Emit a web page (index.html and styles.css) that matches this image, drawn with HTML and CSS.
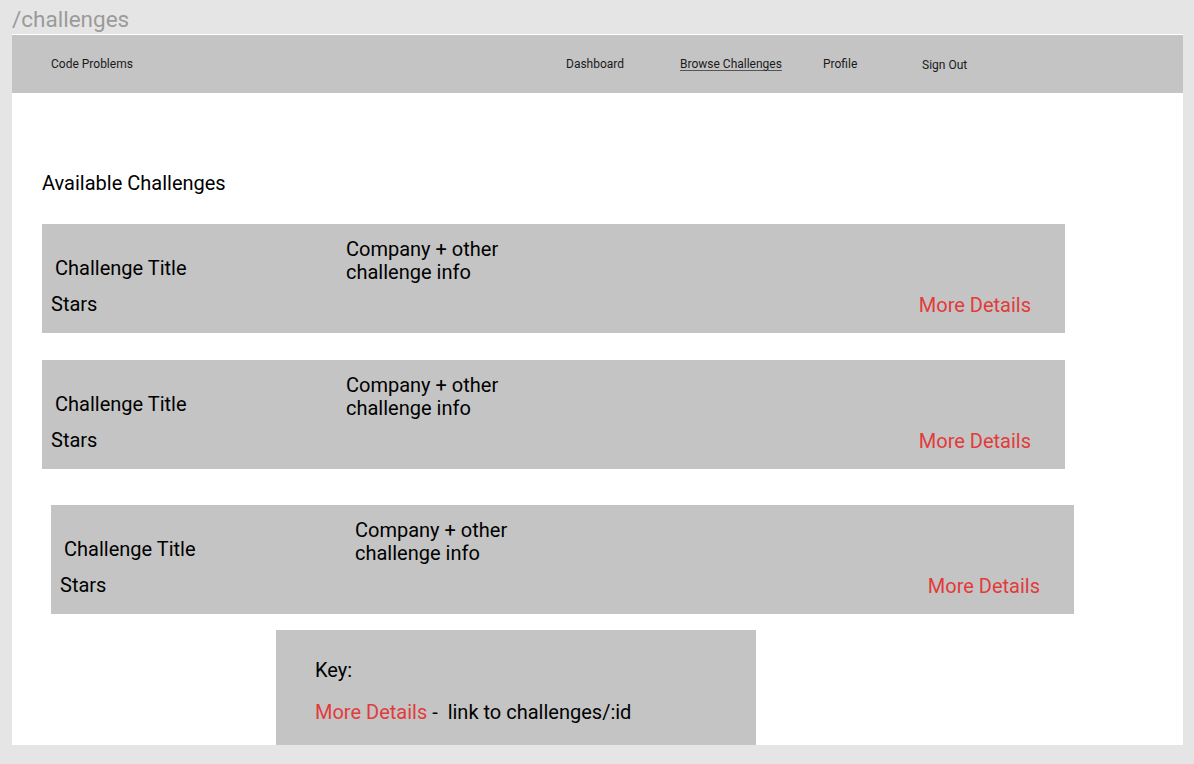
FILE: index.html
```html
<!DOCTYPE html>
<html lang="en">
<head>
<meta charset="utf-8">
<title>/challenges</title>
<link rel="stylesheet" href="styles.css">
</head>
<body>
<div class="route">/challenges</div>
<div class="frame">
  <nav class="nav">
    <span class="brand">Code Problems</span>
    <span class="nav-link">Dashboard</span>
    <span class="nav-link active">Browse Challenges</span>
    <span class="nav-link">Profile</span>
    <span class="nav-link signout">Sign Out</span>
  </nav>
  <main class="content">
    <h1 class="heading">Available Challenges</h1>
    <div class="card">
      <div class="card-left">
        <div class="card-title">Challenge Title</div>
        <div class="card-stars">Stars</div>
      </div>
      <div class="card-info">Company + other<br>challenge info</div>
      <div class="card-link">More Details</div>
    </div>
    <div class="card card-second">
      <div class="card-left">
        <div class="card-title">Challenge Title</div>
        <div class="card-stars">Stars</div>
      </div>
      <div class="card-info">Company + other<br>challenge info</div>
      <div class="card-link">More Details</div>
    </div>
    <div class="card card-third">
      <div class="card-left">
        <div class="card-title">Challenge Title</div>
        <div class="card-stars">Stars</div>
      </div>
      <div class="card-info">Company + other<br>challenge info</div>
      <div class="card-link">More Details</div>
    </div>
    <div class="key">
      <div class="key-title">Key:</div>
      <div class="key-row"><span class="red">More Details</span> -&nbsp; link to challenges/:id</div>
    </div>
  </main>
</div>
</body>
</html>
```

FILE: styles.css
```css
* { box-sizing: border-box; }

html, body {
  margin: 0;
  padding: 0;
}

body {
  background: #e5e5e5;
  font-family: Roboto, "Liberation Sans", Arial, sans-serif;
  color: #000;
  width: 1194px;
  height: 764px;
  overflow: hidden;
}

.route {
  height: 34px;
  padding: 4px 0 0 12px;
  font-size: 22.5px;
  line-height: 30px;
  color: #9b9b9b;
}

.frame {
  margin-left: 12px;
  width: 1171px;
  height: 711px;
  background: #fff;
  padding-top: 1px;
  overflow: hidden;
}

.nav {
  height: 58px;
  background: #c4c4c4;
  display: grid;
  grid-template-columns: 515px 114px 143px 99px auto;
  align-items: center;
  padding-left: 39px;
  font-size: 12px;
  color: #1a1a1a;
}

.nav-link.active {
  text-decoration: underline;
  text-decoration-color: #555;
  text-underline-offset: 2px;
}

.nav-link.signout {
  margin-top: 2px;
}

.content {
  padding: 80px 0 0 30px;
}

.heading {
  margin: 0 0 30px;
  font-size: 20px;
  font-weight: 400;
  line-height: 21px;
}

.card {
  width: 1023px;
  height: 109px;
  background: #c4c4c4;
  display: grid;
  grid-template-columns: 295px 1fr auto;
  padding: 14px 34px 0 9px;
  font-size: 20px;
  line-height: 23px;
}

.card-second { margin-top: 27px; }

.card-third {
  margin-top: 36px;
  margin-left: 9px;
}

.card-left {
  padding-top: 19px;
  display: flex;
  flex-direction: column;
  gap: 13px;
}

.card-title { padding-left: 4px; }

.card-link {
  color: #e13b3b;
  padding-top: 56px;
}

.key {
  margin: 16px 0 0 234px;
  width: 480px;
  height: 130px;
  background: #c4c4c4;
  padding: 29px 0 0 39px;
  font-size: 20px;
  line-height: 23px;
}

.key-row { margin-top: 19px; }

.red { color: #e13b3b; }
```
